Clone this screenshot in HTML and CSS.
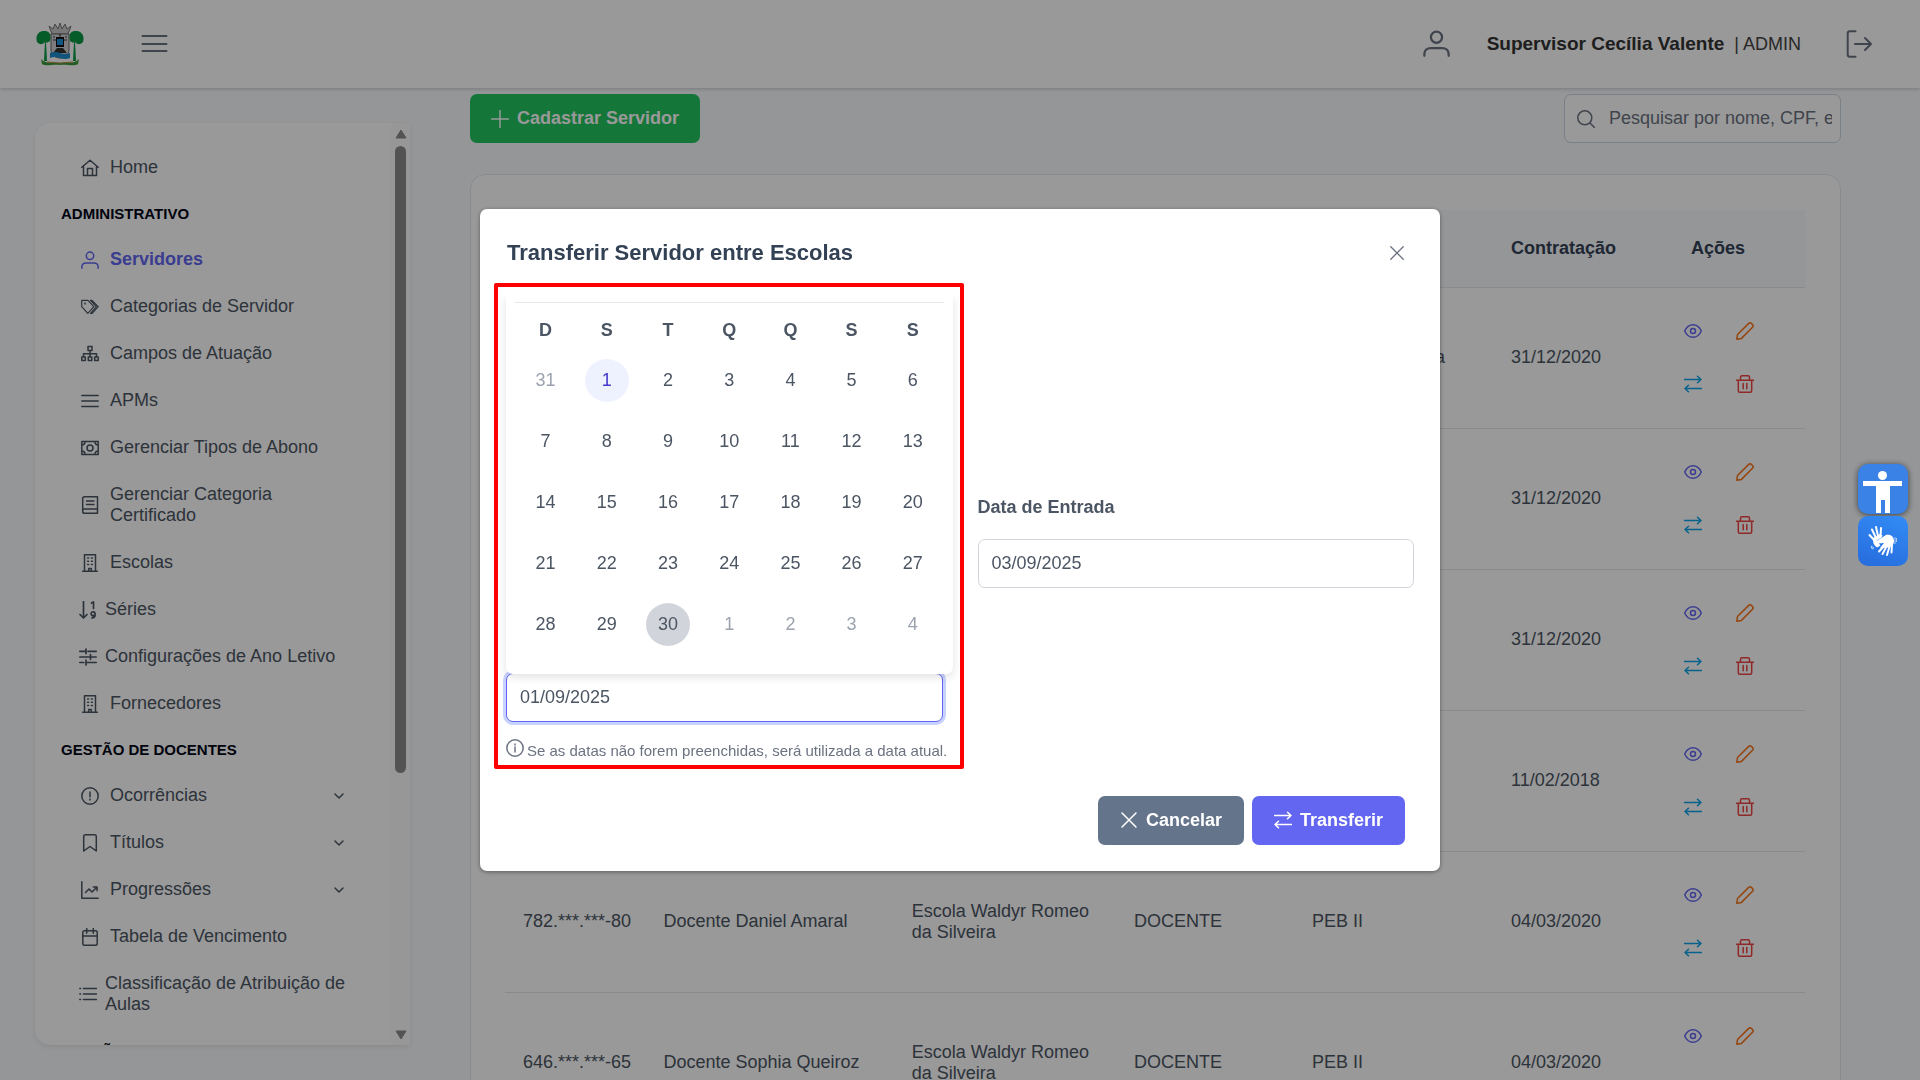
FILE: index.html
```html
<!DOCTYPE html>
<html lang="pt-BR">
<head>
<meta charset="utf-8">
<title>Servidores</title>
<link rel="stylesheet" href="styles.css">
</head>
<body>
<svg class="sprite" aria-hidden="true">
  <symbol id="i-home" viewBox="0 0 18 18"><path d="M.8 8.200 9 1.200l8.200 7M2.500 7v9.500h13V7M6.500 16.500V9.500h5v7"/></symbol>
  <symbol id="i-user" viewBox="0 0 18 18"><circle cx="9" cy="4.800" r="3.700"/><path d="M.9 17.200v-1.200c0-2.600 1.900-4 4.300-4h7.600c2.400 0 4.300 1.400 4.300 4v1.200"/></symbol>
  <symbol id="i-tags" viewBox="0 0 18 18"><path d="M.7 2.300h6.300l5.800 6.400-6 6.600L.7 8.700zM9.500 2.300h1.500l6.200 6.400-6 6.600H9.500l5.800-6.600z" stroke-width="1.200"/><circle cx="4" cy="5.600" r=".3"/></symbol>
  <symbol id="i-sitemap" viewBox="0 0 18 18"><path d="M7 1.500h4v4H7zM.8 12h3.500v3.500H.8zM7.300 12h3.500v3.500H7.300zM13.700 12h3.500v3.500h-3.500zM9 5.500V12M2.500 12V8.800h13V12"/></symbol>
  <symbol id="i-bars" viewBox="0 0 18 18"><path d="M.8 3.500h16.400M.8 9h16.400M.8 14.500h16.400"/></symbol>
  <symbol id="i-money" viewBox="0 0 18 18"><path d="M.8 2.500h16.400v13H.8zM.8 6c2.200 0 3.200-1.300 3.200-3.500M17.200 6C15 6 14 4.700 14 2.500M.8 12c2.200 0 3.200 1.300 3.200 3.500M17.200 12c-2.200 0-3.200 1.300-3.200 3.500"/><circle cx="9" cy="9" r="3"/></symbol>
  <symbol id="i-book" viewBox="0 0 18 18"><path d="M3.500.8h13v16.400H3.500c-1 0-1.800-.8-1.800-1.800V2.600c0-1 .8-1.800 1.800-1.800zM1.700 15c0-1.400.8-2 1.800-2h13M5.500 5h7.500M5.500 8.500h7.500"/></symbol>
  <symbol id="i-building" viewBox="0 0 18 18"><path d="M1.700 17.200h14.600M3.500 17V.8h11V17M7.700 17v-2.500h2.600V17"/><path d="M6.700 4h.8M10.500 4h.8M6.700 7.200h.8M10.500 7.200h.8M6.700 10.500h.8M10.500 10.500h.8" stroke-width="1.600"/></symbol>
  <symbol id="i-sort" viewBox="0 0 18 18"><path d="M4.500.5v16M1 13.500l3.500 3.500L8 13.500M12.500 2l2-1v6.500M16 13.200a2 1.900 0 1 1 0-1v2c0 1.600-.8 2.600-3 2.600" stroke-width="1.700"/></symbol>
  <symbol id="i-sliders" viewBox="0 0 18 18"><path d="M.8 3.300h5.500M9 3.300h8.200M7 1v4.600M.8 9h9.500M13 9h4.200M11.500 6.500v4.800M.8 14.500h4M7.500 14.500h9.700M7 12v5" stroke-width="1.700"/></symbol>
  <symbol id="i-alert" viewBox="0 0 18 18"><circle cx="9" cy="9" r="8.200"/><path d="M9 5v4.800M9 12v1"/></symbol>
  <symbol id="i-info" viewBox="0 0 18 18"><circle cx="9" cy="9" r="8.200"/><path d="M9 8v5M9 5v1"/></symbol>
  <symbol id="i-bookmark" viewBox="0 0 18 18"><path d="M2.700 17V2.500c0-1 .7-1.700 1.700-1.700h9.200c1 0 1.700.7 1.700 1.700V17L9 12.500z"/></symbol>
  <symbol id="i-chart" viewBox="0 0 18 18"><path d="M.8.8v16.400h16.400M4.500 11.500 8 8l3 3 4.800-4.700M12.300 6h3.800v3.800"/></symbol>
  <symbol id="i-calendar" viewBox="0 0 18 18"><rect x="1.800" y="2.800" width="14.400" height="14.400" rx="1.500"/><path d="M1.800 8h14.400M5.700.5v4.700M12.300.5v4.700"/></symbol>
  <symbol id="i-list" viewBox="0 0 18 18"><path d="M4.500 3.500h13M4.500 9h13M4.500 14.500h13M.8 3.500h.8M.8 9h.8M.8 14.500h.8"/></symbol>
  <symbol id="i-down" viewBox="0 0 18 18"><path d="M5 7l4 4 4-4"/></symbol>
  <symbol id="i-eye" viewBox="0 0 18 18"><path d="M.7 9C2.500 5 5.500 2.700 9 2.700S15.500 5 17.300 9c-1.800 4-4.800 6.300-8.300 6.300S2.500 13 .7 9z"/><circle cx="9" cy="9" r="2.500"/></symbol>
  <symbol id="i-pencil" viewBox="0 0 18 18"><path d="M.8 17.200l.7-4.700L12.700 1.400c.8-.8 2-.8 2.700 0l1.100 1.100c.8.8.8 2 0 2.800L5.500 16.400z"/></symbol>
  <symbol id="i-swap" viewBox="0 0 18 18"><path d="M.5 4.500h16.500M13.500 1.200 17 4.500l-3.500 3.300M17.500 13.500H1M4.500 10.200 1 13.500l3.500 3.300"/></symbol>
  <symbol id="i-trash" viewBox="0 0 18 18"><path d="M.5 5.200h17M2.300 5.200v10.500c0 .9.600 1.500 1.500 1.500h10.400c.9 0 1.500-.6 1.500-1.500V5.200M4.500 5V2.300C4.500 1.400 5 .8 6 .8h6c1 0 1.500.6 1.500 1.500V5M7.200 8.500v5.300M10.800 8.500v5.300"/></symbol>
  <symbol id="i-plus" viewBox="0 0 18 18"><path d="M9 .5v17M.5 9h17"/></symbol>
  <symbol id="i-times" viewBox="0 0 18 18"><path d="M2 2l14 14M16 2 2 16"/></symbol>
  <symbol id="i-search" viewBox="0 0 18 18"><circle cx="7.800" cy="7.800" r="7"/><path d="M13 13l4.500 4.500"/></symbol>
  <symbol id="i-exit" viewBox="0 0 26 28"><path d="M9 1.200H3.500C2 1.200 1.200 2 1.200 3.500v21C1.200 26 2 26.800 3.500 26.800H9M8.500 14h16M18.500 8l6 6-6 6"/></symbol>
</svg>

<header class="topbar">
  <a class="brand" href="#" aria-label="Início">
    <svg class="emblem" viewBox="0 0 48 44">
      <path d="M13 4l3 8h16l3-8-4 3-2-5-3 5-2-6-2 6-3-5-2 5z" fill="#c9c9c9" stroke="#777" stroke-width="1"/>
      <path d="M15 12h18v16c0 5-4 8-9 8s-9-3-9-8z" fill="#d0d0d4" stroke="#666" stroke-width="1"/>
      <path d="M17 18h3M28 18h3M17 15h2M29 15h2" stroke="#333"/>
      <path d="M20 15h8v10h-8z" fill="#111"/><path d="M21 17h6v6h-6z" fill="#1e90d8"/><path d="M24 12v5" stroke="#222"/>
      <path d="M17 31l4-5h6l4 5z" fill="#333"/>
      <path d="M14 31q5-2 10 0t10 0v5q-5 2-10 0t-10 0z" fill="#1d8ccf"/>
      <path d="M1 20C-1 13 3 9 8 9s8 3 6 10c-3 2-3 2-4 1l1 19H8l1-19c-3 3-5 3-8 0zM47 20c2-7-2-11-7-11s-8 3-6 10c3 2 3 2 4 1l-1 19h3l-1-19c3 3 5 3 8 0z" fill="#0a9a45"/>
      <path d="M5 37c4 5 10 3 19 4 9-1 15 1 19-4l-1 5c-5 3-10 0-18 1-8-1-13 2-18-1z" fill="#3e9a3a"/>
      <path d="M11 40q13 2 26 0" stroke="#b98b40" fill="none"/>
    </svg>
  </a>
  <button class="bare" aria-label="Menu"><svg class="icon icon-menu" viewBox="0 0 26 20"><path d="M1 2h24M1 10h24M1 17h24"/></svg></button>
  <div class="account">
    <svg class="icon icon-lg"><use href="#i-user"/></svg>
    <p class="who"><strong>Supervisor Cecília Valente</strong> <span>| ADMIN</span></p>
    <button class="bare" aria-label="Sair"><svg class="icon icon-exit"><use href="#i-exit"/></svg></button>
  </div>
</header>

<div class="shell">
  <aside class="sidebar">
    <nav class="menu">
      <a href="#"><svg class="icon"><use href="#i-home"/></svg>Home</a>
      <h2>ADMINISTRATIVO</h2>
      <a class="active" href="#"><svg class="icon"><use href="#i-user"/></svg>Servidores</a>
      <a href="#"><svg class="icon"><use href="#i-tags"/></svg>Categorias de Servidor</a>
      <a href="#"><svg class="icon"><use href="#i-sitemap"/></svg>Campos de Atuação</a>
      <a href="#"><svg class="icon"><use href="#i-bars"/></svg>APMs</a>
      <a href="#"><svg class="icon"><use href="#i-money"/></svg>Gerenciar Tipos de Abono</a>
      <a href="#"><svg class="icon"><use href="#i-book"/></svg><span>Gerenciar Categoria Certificado</span></a>
      <a href="#"><svg class="icon"><use href="#i-building"/></svg>Escolas</a>
      <a class="tight" href="#"><svg class="icon"><use href="#i-sort"/></svg>Séries</a>
      <a class="tight" href="#"><svg class="icon"><use href="#i-sliders"/></svg>Configurações de Ano Letivo</a>
      <a href="#"><svg class="icon"><use href="#i-building"/></svg>Fornecedores</a>
      <h2>GESTÃO DE DOCENTES</h2>
      <a href="#"><svg class="icon"><use href="#i-alert"/></svg>Ocorrências<svg class="icon caret"><use href="#i-down"/></svg></a>
      <a href="#"><svg class="icon"><use href="#i-bookmark"/></svg>Títulos<svg class="icon caret"><use href="#i-down"/></svg></a>
      <a href="#"><svg class="icon"><use href="#i-chart"/></svg>Progressões<svg class="icon caret"><use href="#i-down"/></svg></a>
      <a href="#"><svg class="icon"><use href="#i-calendar"/></svg>Tabela de Vencimento</a>
      <a class="tight" href="#"><svg class="icon"><use href="#i-list"/></svg><span>Classificação de Atribuição de Aulas</span></a>
      <h2>GESTÃO</h2>
    </nav>
    <div class="scroll" aria-hidden="true">
      <svg viewBox="0 0 12 10"><path d="M6 1l5 8H1z"/></svg>
      <div class="track"><div class="thumb"></div></div>
      <svg viewBox="0 0 12 10"><path d="M6 9l5-8H1z"/></svg>
    </div>
  </aside>

  <main class="main">
    <div class="toolbar">
      <button class="btn btn-green"><svg class="icon"><use href="#i-plus"/></svg>Cadastrar Servidor</button>
      <label class="search"><svg class="icon"><use href="#i-search"/></svg><input type="text" aria-label="Pesquisar" placeholder="Pesquisar por nome, CPF, email"></label>
    </div>
    <section class="card">
      <table class="grid">
        <colgroup><col class="c-cpf"><col class="c-name"><col class="c-school"><col class="c-role"><col class="c-area"><col class="c-date"><col class="c-act"></colgroup>
        <thead><tr><th></th><th></th><th></th><th></th><th></th><th>Contratação</th><th class="actions">Ações</th></tr></thead>
        <tbody id="rows"></tbody>
      </table>
    </section>
  </main>
</div>

<div class="overlay">
  <div class="dialog" role="dialog" aria-labelledby="dlg-title">
    <div class="dialog-head">
      <h1 id="dlg-title">Transferir Servidor entre Escolas</h1>
      <button class="bare" aria-label="Fechar"><svg class="icon icon-close"><use href="#i-times"/></svg></button>
    </div>
    <div class="dialog-body">
      <div class="field-out">
        <div class="picker">
          <table class="days">
            <thead><tr><th>D</th><th>S</th><th>T</th><th>Q</th><th>Q</th><th>S</th><th>S</th></tr></thead>
            <tbody>
              <tr><td class="off">31</td><td><span class="chosen">1</span></td><td>2</td><td>3</td><td>4</td><td>5</td><td>6</td></tr>
              <tr><td>7</td><td>8</td><td>9</td><td>10</td><td>11</td><td>12</td><td>13</td></tr>
              <tr><td>14</td><td>15</td><td>16</td><td>17</td><td>18</td><td>19</td><td>20</td></tr>
              <tr><td>21</td><td>22</td><td>23</td><td>24</td><td>25</td><td>26</td><td>27</td></tr>
              <tr><td>28</td><td>29</td><td><span class="today">30</span></td><td class="off">1</td><td class="off">2</td><td class="off">3</td><td class="off">4</td></tr>
            </tbody>
          </table>
        </div>
        <input class="text focused" type="text" value="01/09/2025" aria-label="Data">
        <small class="hint"><svg class="icon"><use href="#i-info"/></svg>Se as datas não forem preenchidas, será utilizada a data atual.</small>
      </div>
      <div class="field-in">
        <label for="entrada">Data de Entrada</label>
        <input class="text" id="entrada" type="text" value="03/09/2025">
      </div>
    </div>
    <div class="dialog-foot">
      <button class="btn btn-gray"><svg class="icon"><use href="#i-times"/></svg>Cancelar</button>
      <button class="btn btn-indigo"><svg class="icon"><use href="#i-swap"/></svg>Transferir</button>
    </div>
    <div class="highlight"></div>
  </div>
</div>

<div class="widgets">
  <button class="widget widget-access" aria-label="Acessibilidade"><svg viewBox="0 0 50 50"><circle cx="24.500" cy="11.500" r="4.500"/><path d="M5 17h39v5H32v27h-5V36h-4v13h-5V22H5z"/></svg></button>
  <button class="widget widget-libras" aria-label="Libras"><svg viewBox="0 0 50 50">
    <path class="hand" d="M17 25l-5.500-6M18 22l-4-8.500M20 20l-2-9M22.500 20l.5-8"/>
    <path d="M15 22l7-4 2.500 1.500-1 2-5 3 4 5-3.500 2c-3-2-4.500-5-4-9.500z"/>
    <path d="M20 24l8-5c5-1 8 2 8 6 0 3-2 6-6 6.500l-8 .5 4-5-6 .500c-2-1-1-3 0-3.500z"/>
    <path class="hand" d="M26 30l-5 5.500M28.500 30.500l-4 7.500M31.500 30.500l-2.500 8.500M34 28l-.5 8.500"/>
    <path class="thin" d="M37 21v7M38.500 22v4M13 30l3 2-2 1z"/>
  </svg></button>
</div>
<script src="rows.js"></script>
</body>
</html>
```
FILE: rows.js
```js
const rows = [
  { tail: 'a', date: '31/12/2020' },
  { date: '31/12/2020' },
  { date: '31/12/2020' },
  { date: '11/02/2018' },
  { cpf: '782.***.***-80', name: 'Docente Daniel Amaral', school: 'Escola Waldyr Romeo da Silveira', role: 'DOCENTE', area: 'PEB II', date: '04/03/2020' },
  { cpf: '646.***.***-65', name: 'Docente Sophia Queiroz', school: 'Escola Waldyr Romeo da Silveira', role: 'DOCENTE', area: 'PEB II', date: '04/03/2020' }
];
const action = (name, label) =>
  `<button class="act act-${name}" aria-label="${label}"><svg class="icon"><use href="#i-${name}"/></svg></button>`;
document.getElementById('rows').innerHTML = rows.map(r => `<tr>
  <td>${r.cpf || ''}</td><td>${r.name || ''}</td><td>${r.school || ''}</td><td>${r.role || ''}</td>
  <td${r.tail ? ' class="tail"' : ''}>${r.area || r.tail || ''}</td><td>${r.date}</td>
  <td class="actions"><div class="acts">${action('eye', 'Ver')}${action('pencil', 'Editar')}${action('swap', 'Transferir')}${action('trash', 'Excluir')}</div></td>
</tr>`).join('');
```
FILE: styles.css
```css
* { box-sizing: border-box; }
body {
  margin: 0;
  height: 100vh;
  overflow: hidden;
  display: flex;
  flex-direction: column;
  background: #f8fafc;
  color: #4b5563;
  font: 18px/21px "Liberation Sans", Arial, sans-serif;
}
button, input { font: inherit; color: inherit; }
button { cursor: pointer; }
.sprite { display: none; }
.icon {
  flex: none;
  width: 18px;
  height: 18px;
  fill: none;
  stroke: currentColor;
  stroke-width: 1.5;
  stroke-linecap: round;
  stroke-linejoin: round;
}
.bare { display: flex; padding: 0; border: 0; background: none; }

.topbar {
  flex: none;
  display: flex;
  align-items: center;
  height: 88px;
  padding: 0 47px 1px 36px;
  background: #fff;
  color: #6b7280;
  box-shadow: 0 1px 4px rgba(0, 0, 0, .2);
  z-index: 1;
}
.brand { margin-right: 57px; }
.emblem { display: block; width: 48px; height: 44px; }
.icon-menu { width: 27px; height: 20px; stroke-width: 2; }
.account { display: flex; align-items: center; margin-left: auto; }
.icon-lg { width: 27px; height: 27px; }
.who { margin: 0 45px 0 37px; color: #444; }
.who strong { margin-right: 5px; color: #333; font-size: 19px; }
.icon-exit { width: 27px; height: 28px; stroke-width: 2; }

.shell { display: flex; flex: 1; min-height: 0; }
.sidebar {
  flex: none;
  display: flex;
  width: 375px;
  height: calc(100vh - 158px);
  margin: 35px 60px 0 35px;
  overflow: hidden;
  border-radius: 15px 0 0 15px;
  background: #fff;
  box-shadow: 0 2px 5px rgba(0, 0, 0, .08);
}
.menu { flex: 1; padding: 21px 43px 0 26px; overflow: hidden; }
.menu a {
  display: flex;
  align-items: center;
  gap: 11px;
  padding: 13px 0 13px 20px;
  color: #4b5563;
  text-decoration: none;
}
.menu a.tight { gap: 8px; padding-left: 18px; }
.menu a.active { color: #6366f1; font-weight: 700; }
.menu .caret { margin-left: auto; }
.menu h2 { margin: 0; padding: 14px 0 13px; font-size: 15px; line-height: 18px; color: #020617; }
.scroll {
  display: flex;
  flex-direction: column;
  align-items: center;
  width: 19px;
  padding: 6px 0 5px;
  background: #fcfcfc;
}
.scroll svg { width: 12px; height: 10px; fill: #8b8b8b; stroke: #8b8b8b; stroke-linejoin: round; }
.track { flex: 1; padding: 7px 0; }
.thumb { width: 11px; height: 71.5%; border-radius: 6px; background: #8b8b8b; }

.main { flex: 1; min-width: 0; padding: 6px 79px 0 0; }
.toolbar { display: flex; justify-content: space-between; }
.btn {
  display: flex;
  align-items: center;
  justify-content: center;
  gap: 8px;
  height: 49px;
  padding: 0 18px;
  border: 0;
  border-radius: 7px;
  color: #fff;
  font-weight: 700;
  white-space: nowrap;
}
.btn-green { background: #22c55e; width: 230px; }
.btn-gray { background: #64748b; width: 146px; }
.btn-indigo { background: #6366f1; width: 153px; }
.search {
  display: flex;
  align-items: center;
  gap: 14px;
  width: 277px;
  height: 49px;
  padding: 0 8px 0 12px;
  border: 1px solid #cbd5e1;
  border-radius: 7px;
  background: #fff;
  color: #6b7280;
}
.search input { flex: 1; min-width: 0; padding: 0; border: 0; outline: 0; background: none; }
.search input::placeholder { color: #6b7280; opacity: 1; }

.card {
  margin-top: 31px;
  padding: 35px 35px 0 34px;
  border: 1px solid #e2e8f0;
  border-radius: 15px;
  background: #fff;
}
.grid { width: 100%; table-layout: fixed; border-collapse: collapse; }
.grid th, .grid td { padding: 17px 18px; text-align: left; border-bottom: 1px solid #e5e7eb; }
.grid th { height: 77px; background: #f8fafc; color: #334155; }
.grid .actions { padding-right: 36px; text-align: center; }
.grid .tail { padding-right: 48px; text-align: right; }
.c-cpf { width: 10.8%; }
.c-name { width: 19.1%; }
.c-school { width: 17.1%; }
.c-role { width: 13.7%; }
.c-area { width: 15.3%; }
.c-date { width: 12%; }
.c-act { width: 12%; }
.acts { display: grid; grid-template-columns: 52px 52px; grid-auto-rows: 53px; }
.act { display: grid; place-items: center; padding: 0; border: 0; background: none; }
.act-eye { color: #6366f1; }
.act-pencil { color: #f97316; }
.act-swap { color: #0ea5e9; }
.act-trash { color: #ef4444; }

.overlay {
  position: fixed;
  inset: 0;
  z-index: 2;
  display: grid;
  place-items: center;
  background: rgba(0, 0, 0, .4);
}
.dialog {
  position: relative;
  width: 50vw;
  border-radius: 7px;
  background: #fff;
  box-shadow: 0 1px 4px rgba(0, 0, 0, .4);
}
.dialog-head {
  display: flex;
  align-items: center;
  justify-content: space-between;
  height: 87px;
  padding: 0 35px 0 27px;
  color: #6b7280;
}
.dialog-head h1 { margin: 0; font-size: 22px; line-height: 26px; color: #334155; }
.icon-close { width: 16px; height: 16px; }
.dialog-body {
  display: grid;
  grid-template-columns: minmax(0, 1fr) minmax(0, 1fr);
  gap: 35px;
  align-items: center;
  padding: 0 26px;
  overflow: hidden;
}
.picker {
  position: relative;
  margin: 0 -10px -1px 0;
  padding: 6px 9px 19px;
  border-radius: 0 0 7px 7px;
  background: #fff;
  box-shadow: 0 3px 10px rgba(0, 0, 0, .12);
}
.days { width: 100%; table-layout: fixed; border-collapse: collapse; border-top: 1px solid #e5e7eb; }
.days th { height: 47px; padding: 7px 0 0; }
.days td { height: 61px; padding: 0; text-align: center; }
.days .off { color: #9ca3af; }
.days span { display: grid; place-items: center; width: 44px; height: 43px; margin: auto; border-radius: 50%; }
.chosen { background: #eef2ff; color: #4338ca; }
.today { background: #d1d5db; }
.text {
  display: block;
  width: 100%;
  height: 49px;
  padding: 0 13px;
  border: 1px solid #d1d5db;
  border-radius: 7px;
  background: #fff;
  outline: 0;
}
.focused { border-color: #6366f1; box-shadow: 0 0 0 3px #c7d2fe; }
.hint {
  display: flex;
  gap: 3px;
  padding: 17px 0;
  font-size: 15px;
  line-height: 23px;
  color: #6b7280;
  white-space: nowrap;
}
.field-in { padding-top: 10px; }
.field-in label { display: block; margin-bottom: 21px; font-weight: 700; }
.dialog-foot {
  display: flex;
  justify-content: flex-end;
  gap: 8px;
  padding: 17px 35px 26px;
}
.highlight {
  position: absolute;
  left: 14px;
  top: 74px;
  width: 470px;
  height: 486px;
  border: 4px solid #f00;
  border-radius: 2px;
  pointer-events: none;
}

.widgets {
  position: fixed;
  right: 12px;
  top: 464px;
  z-index: 3;
  display: flex;
  flex-direction: column;
  gap: 2px;
}
.widget { width: 50px; height: 50px; padding: 0; border: 0; border-radius: 10px; }
.widget svg { display: block; width: 50px; height: 50px; fill: #fff; }
.widget-access { background: #3b82e6; box-shadow: 0 1px 6px rgba(0, 0, 0, .6); }
.widget-libras { background: linear-gradient(200deg, #338cf6, #266bdc); }
.widget-libras .hand { fill: none; stroke: #fff; stroke-width: 2; stroke-linecap: round; }
.widget-libras .thin { fill: none; stroke: #a9cdfb; stroke-width: 1; }
```
